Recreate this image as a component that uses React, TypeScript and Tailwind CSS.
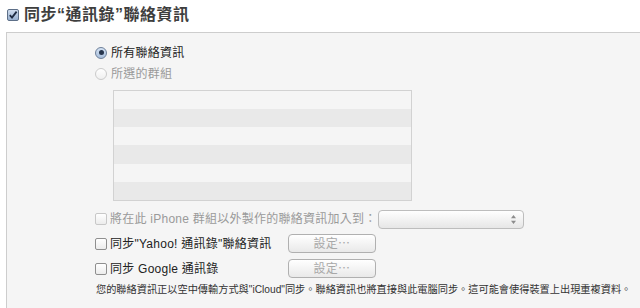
import React from "react";

const font = { fontFamily: '"Liberation Sans", "Noto Sans CJK TC", sans-serif' };

const Checkbox = ({ disabled }: { disabled?: boolean }) => (
  <span
    className={
      "inline-block h-[12px] w-[12px] shrink-0 rounded-[2px] border bg-gradient-to-b from-white to-[#ececec] " +
      (disabled ? "border-[#c8c8c8]" : "border-[#8f8f8f]")
    }
  />
);

const Radio = ({ checked, disabled }: { checked?: boolean; disabled?: boolean }) => (
  <span
    className={
      "flex h-[12px] w-[12px] shrink-0 items-center justify-center rounded-full border bg-gradient-to-b " +
      (checked
        ? "border-[#6d7f99] from-[#d4e2f3] to-[#a9bfdc]"
        : disabled
          ? "border-[#cbcbcb] from-white to-[#f0f0f0]"
          : "border-[#8f8f8f] from-white to-[#ececec]")
    }
  >
    {checked && <span className="h-[5px] w-[5px] rounded-full bg-[#27364d]" />}
  </span>
);

const SetButton = () => (
  <div className="flex h-[19px] w-[88px] items-center justify-center rounded-[4px] border border-[#b0b0b0] bg-gradient-to-b from-white to-[#e9e9e9] text-[12px] text-[#a8a8a8]">
    設定⋯
  </div>
);

export default function App() {
  return (
    <div className="flex h-[308px] w-[640px] flex-col overflow-hidden bg-white text-[#222]" style={font}>
      <header className="flex h-[32px] items-center gap-[5px] pb-[2px] pl-[7px]">
        <span className="flex h-[12px] w-[12px] items-center justify-center rounded-[2px] border border-[#5d6f88] bg-gradient-to-b from-[#d0ddee] to-[#98b0cf]">
          <svg width="10" height="10" viewBox="0 0 10 10">
            <path d="M1.8 5.2 L4 7.6 L8.6 1.6" fill="none" stroke="#1d2a40" strokeWidth="1.8" />
          </svg>
        </span>
        <h1 className="text-[16px] font-bold tracking-[0.5px] text-[#3e3e3e]">同步“通訊錄”聯絡資訊</h1>
      </header>

      <section className="ml-[6px] flex-1 border-l border-t border-[#cdcdcd] bg-[#f5f5f5] pl-[88px] pt-[9px] text-[12px] tracking-[0.25px]">
        <div className="flex h-[21px] items-center gap-[4px]">
          <Radio checked />
          <span>所有聯絡資訊</span>
        </div>
        <div className="flex h-[21px] items-center gap-[4px] text-[#9a9a9a]">
          <Radio disabled />
          <span>所選的群組</span>
        </div>

        <div className="ml-[18px] mt-[6px] grid h-[111px] w-[299px] grid-rows-6 border border-[#d2d2d2]">
          <div className="bg-[#f5f5f5]" />
          <div className="bg-[#e9e9e9]" />
          <div className="bg-[#f5f5f5]" />
          <div className="bg-[#e9e9e9]" />
          <div className="bg-[#f5f5f5]" />
          <div className="bg-[#e9e9e9]" />
        </div>

        <div className="mt-[6px] flex h-[24px] items-center">
          <div className="flex items-center gap-[3px] text-[#9a9a9a]">
            <Checkbox disabled />
            <span>將在此 iPhone 群組以外製作的聯絡資訊加入到：</span>
          </div>
          <div className="ml-auto mr-[116px] flex h-[19px] w-[146px] items-center justify-end rounded-[4px] border border-[#bdbdbd] bg-gradient-to-b from-white to-[#e6e6e6] pr-[6px]">
            <svg width="7" height="11" viewBox="0 0 7 11">
              <path d="M3.5 1 L6 4.3 H1 Z M3.5 10 L6 6.7 H1 Z" fill="#8c8c8c" />
            </svg>
          </div>
        </div>

        <div className="flex h-[25px] items-center">
          <div className="flex w-[193px] items-center gap-[3px]">
            <Checkbox />
            <span>同步"Yahoo! 通訊錄"聯絡資訊</span>
          </div>
          <SetButton />
        </div>

        <div className="flex h-[25px] items-center">
          <div className="flex w-[193px] items-center gap-[3px]">
            <Checkbox />
            <span>同步 Google 通訊錄</span>
          </div>
          <SetButton />
        </div>

        <p className="flex h-[18px] items-center whitespace-nowrap pl-[1px] text-[10.2px] tracking-normal text-[#333]">
          您的聯絡資訊正以空中傳輸方式與"iCloud"同步。聯絡資訊也將直接與此電腦同步。這可能會使得裝置上出現重複資料。
        </p>
      </section>
    </div>
  );
}
